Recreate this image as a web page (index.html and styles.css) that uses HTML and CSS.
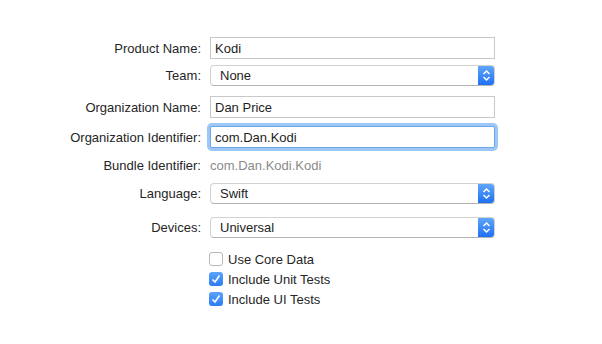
FILE: index.html
```html
<!DOCTYPE html>
<html lang="en">
<head>
    <meta charset="UTF-8">
    <title>Choose options for your new project</title>
    <link rel="stylesheet" href="styles.css">
</head>
<body>
<div class="form">
    <div class="row">
        <label class="label" for="product-name">Product Name:</label>
        <input class="field" type="text" id="product-name" value="Kodi">
    </div>
    <div class="row row-team">
        <span class="label">Team:</span>
        <div class="popup">
            <span class="popup-text">None</span>
            <span class="popup-arrows">
                <svg width="9" height="13" viewBox="0 0 9 13"><path d="M1.5 5 L4.5 2 L7.5 5 M1.5 8 L4.5 11 L7.5 8" fill="none" stroke="#fff" stroke-width="1.5"/></svg>
            </span>
        </div>
    </div>
    <div class="row row-org">
        <label class="label" for="org-name">Organization Name:</label>
        <input class="field" type="text" id="org-name" value="Dan Price">
    </div>
    <div class="row row-ident">
        <label class="label" for="org-ident">Organization Identifier:</label>
        <input class="field focused" type="text" id="org-ident" value="com.Dan.Kodi">
    </div>
    <div class="row row-bundle">
        <span class="label">Bundle Identifier:</span>
        <span class="value">com.Dan.Kodi.Kodi</span>
    </div>
    <div class="row row-lang">
        <span class="label">Language:</span>
        <div class="popup">
            <span class="popup-text">Swift</span>
            <span class="popup-arrows">
                <svg width="9" height="13" viewBox="0 0 9 13"><path d="M1.5 5 L4.5 2 L7.5 5 M1.5 8 L4.5 11 L7.5 8" fill="none" stroke="#fff" stroke-width="1.5"/></svg>
            </span>
        </div>
    </div>
    <div class="row row-devices">
        <span class="label">Devices:</span>
        <div class="popup">
            <span class="popup-text">Universal</span>
            <span class="popup-arrows">
                <svg width="9" height="13" viewBox="0 0 9 13"><path d="M1.5 5 L4.5 2 L7.5 5 M1.5 8 L4.5 11 L7.5 8" fill="none" stroke="#fff" stroke-width="1.5"/></svg>
            </span>
        </div>
    </div>
    <div class="checks">
        <div class="check">
            <span class="box"></span>
            <span>Use Core Data</span>
        </div>
        <div class="check">
            <span class="box on">
                <svg width="14" height="14" viewBox="0 0 14 14"><path d="M3.5 7.5 L6 10 L10.5 3.5" fill="none" stroke="#fff" stroke-width="1.6"/></svg>
            </span>
            <span>Include Unit Tests</span>
        </div>
        <div class="check">
            <span class="box on">
                <svg width="14" height="14" viewBox="0 0 14 14"><path d="M3.5 7.5 L6 10 L10.5 3.5" fill="none" stroke="#fff" stroke-width="1.6"/></svg>
            </span>
            <span>Include UI Tests</span>
        </div>
    </div>
</div>
</body>
</html>
```

FILE: styles.css
```css
body {
    font-family: "Liberation Sans", Arial, sans-serif;
    font-size: 13px;
    color: #262626;
    margin: 0;
    padding: 0;
    background-color: #fff;
}
.form {
    padding-top: 37px;
}
.row {
    display: flex;
    align-items: center;
    height: 22px;
}
.row-team {
    margin-top: 6px;
    height: 21px;
}
.row-org {
    margin-top: 10px;
}
.row-ident {
    margin-top: 8px;
}
.row-bundle {
    margin-top: 7px;
    height: 20px;
}
.row-lang {
    margin-top: 8px;
    height: 21px;
}
.row-devices {
    margin-top: 13px;
    height: 21px;
}
.label {
    width: 210px;
    padding-right: 9px;
    box-sizing: border-box;
    text-align: right;
    flex-shrink: 0;
}
.field {
    width: 285px;
    height: 22px;
    box-sizing: border-box;
    border: 1px solid #c8c8c8;
    padding: 0 4px;
    margin: 0;
    font-family: inherit;
    font-size: 13px;
    color: #1e1e1e;
    outline: none;
}
.field.focused {
    border-color: #6fa6e6;
    box-shadow: 0 0 0 3px #9cc7f7;
    border-radius: 2px;
}
.value {
    color: #8a8a8a;
}
.popup {
    width: 285px;
    height: 21px;
    box-sizing: border-box;
    display: flex;
    align-items: stretch;
    border-radius: 4px;
    border: 1px solid #d2d2d2;
    border-bottom-color: #b4b4b4;
    background-color: #fff;
    overflow: hidden;
}
.popup-text {
    flex: 1;
    padding-left: 9px;
    display: flex;
    align-items: center;
    color: #1e1e1e;
}
.popup-arrows {
    width: 17px;
    display: flex;
    align-items: center;
    justify-content: center;
    background: linear-gradient(#62a8fb, #1c6ef2);
    margin: -1px -1px -1px 0;
}
.checks {
    margin-top: 11px;
    padding-left: 209px;
}
.check {
    display: flex;
    align-items: center;
    height: 20px;
}
.box {
    width: 14px;
    height: 14px;
    box-sizing: border-box;
    border: 1px solid #b8b8b8;
    border-radius: 3px;
    background-color: #fff;
    margin-right: 5px;
    display: flex;
}
.box.on {
    border: none;
    background: linear-gradient(#5aa3fb, #2a7cf4);
}
```
